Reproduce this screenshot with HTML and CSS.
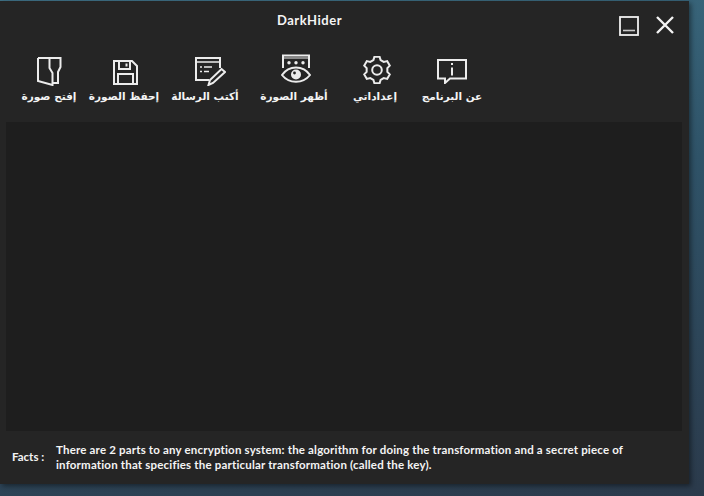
FILE: index.html
```html
<!DOCTYPE html>
<html lang="en">
<head>
    <meta charset="UTF-8">
    <meta name="viewport" content="width=device-width, initial-scale=1.0">
    <title>DarkHider</title>
    <link rel="stylesheet" href="styles.css">
</head>
<body>
    <div class="window">
        <!-- Title bar -->
        <header class="title-bar">
            <h1 class="title">DarkHider</h1>
            <div class="window-buttons">
                <svg width="20" height="20" viewBox="0 0 20 20" fill="none" stroke="#f0f0f0">
                    <rect x="1" y="1" width="18" height="18" stroke-width="1.800"/>
                    <path d="M4 14.500h12" stroke-width="1.600" stroke="#c8c8c8"/>
                </svg>
                <svg width="20" height="20" viewBox="0 0 20 20" fill="none" stroke="#f4f4f4" stroke-width="2.400">
                    <path d="M2 1l16 16M18 1L2 17"/>
                </svg>
            </div>
        </header>

        <!-- Toolbar -->
        <nav class="toolbar">
            <div class="tool tool-open">
                <svg width="25" height="29" viewBox="0 0 25 29" fill="none" stroke="#ececec" stroke-width="2">
                    <path d="M1 1h22.500v9L21 15v11h-5.500"/>
                    <path d="M1 1v23l14.500 4V16l-3-5V1"/>
                </svg>
                <span class="tool-label" dir="rtl">إفتح صورة</span>
            </div>
            <div class="tool tool-save">
                <svg width="25" height="25" viewBox="0 0 25 25" fill="none" stroke="#ececec" stroke-width="2">
                    <path d="M1 1h18l5 5v18H1z"/>
                    <path d="M6 1v8h11V1M13.500 3.500v3"/>
                    <path d="M5 24V14h15v10"/>
                </svg>
                <span class="tool-label" dir="rtl">إحفظ الصورة</span>
            </div>
            <div class="tool tool-write">
                <svg width="31" height="29" viewBox="0 0 31 29" fill="none" stroke="#ececec" stroke-width="2">
                    <path d="M25 11V1H1v22h13"/>
                    <path d="M1 5h24" stroke-width="1.500"/>
                    <path d="M5 10h2M9 10h8M5 14.500h2M9 14.500h5" stroke-width="1.500"/>
                    <path d="M26.500 12l3.500 3-12 11-4.500 2 1.500-5z"/>
                </svg>
                <span class="tool-label" dir="rtl">أكتب الرسالة</span>
            </div>
            <div class="tool tool-show">
                <svg width="30" height="30" viewBox="0 0 30 30" fill="none" stroke="#ececec" stroke-width="2">
                    <path d="M2 14V1.500h26V14"/>
                    <path d="M2 4h26" stroke-width="1"/>
                    <circle cx="8" cy="8.700" r="1.700" fill="#ececec" stroke="none"/>
                    <circle cx="15" cy="8.700" r="1.700" fill="#ececec" stroke="none"/>
                    <circle cx="22" cy="8.700" r="1.700" fill="#ececec" stroke="none"/>
                    <path d="M1 21c7-10 21-10 28 0-7 9-21 9-28 0z"/>
                    <circle cx="15" cy="20.500" r="5" fill="#ececec" stroke="none"/>
                    <circle cx="13.500" cy="19" r="1.400" fill="#252525" stroke="none"/>
                </svg>
                <span class="tool-label" dir="rtl">أظهر الصورة</span>
            </div>
            <div class="tool tool-settings">
                <svg width="28" height="28" viewBox="0 0 28 28" fill="none" stroke="#ececec" stroke-width="2">
                    <path d="M10.410 4.130L11.420.750h5.160l1.010 3.380 3.160 1.830 3.440-.820 2.570 4.460-2.420 2.580v3.640l2.420 2.580-2.570 4.460-3.440-.820-3.160 1.830-1.010 3.380h-5.160l-1.010-3.380-3.160-1.830-3.440.820-2.570-4.460 2.420-2.580v-3.640L1.240 9.600l2.570-4.460 3.440.820z"/>
                    <circle cx="14" cy="14" r="4.800"/>
                </svg>
                <span class="tool-label" dir="rtl">إعداداتي</span>
            </div>
            <div class="tool tool-about">
                <svg width="30" height="25" viewBox="0 0 30 25" fill="none" stroke="#ececec" stroke-width="2">
                    <path d="M1 1h28v18.500H13L8 24v-4.500H1z"/>
                    <path d="M15 8.500v8M15 4v2"/>
                </svg>
                <span class="tool-label" dir="rtl">عن البرنامج</span>
            </div>
        </nav>

        <!-- Message area -->
        <main class="content"></main>

        <!-- Facts -->
        <footer class="facts">
            <span class="facts-label">Facts :</span>
            <p class="facts-text">There are 2 parts to any encryption system: the algorithm for doing the transformation and a secret piece of information that specifies the particular transformation (called the key).</p>
        </footer>
    </div>
</body>
</html>
```

FILE: styles.css
```css
html, body {
    height: 100%;
}

body {
    margin: 0;
    padding-top: 1px;
    box-sizing: border-box;
    overflow: hidden;
    font-family: "Lato", "Liberation Sans", sans-serif;
    color: #f4f4f4;
    background: linear-gradient(170deg, #3f7186 0%, #2f5368 45%, #2b3a4b 100%);
}

/* Main window */
.window {
    width: 689px;
    height: 483px;
    display: flex;
    flex-direction: column;
    background: #252525;
    box-shadow: 2px 2px 5px rgba(0, 0, 0, 0.45);
}

.title-bar {
    height: 52px;
    display: flex;
    align-items: flex-start;
    justify-content: space-between;
    padding: 0 14px 0 277px;
    box-sizing: border-box;
}

.title {
    margin: 11px 0 0;
    font-size: 13px;
    font-weight: 700;
    letter-spacing: 0.5px;
    line-height: 16px;
}

.window-buttons {
    display: flex;
    gap: 16px;
    margin-top: 15px;
}

/* Toolbar */
.toolbar {
    height: 69px;
    display: flex;
    align-items: flex-start;
    padding-left: 19px;
    box-sizing: border-box;
}

.tool {
    display: flex;
    flex-direction: column;
    align-items: center;
    justify-content: flex-end;
    height: 50px;
    flex: none;
}

.tool-label {
    font-family: "DejaVu Sans", sans-serif;
    font-size: 10.500px;
    font-weight: 700;
    line-height: 14px;
    margin-top: 3px;
    white-space: nowrap;
}

.tool-open { width: 60px; }
.tool-save { width: 72px; margin-left: 9px; }
.tool-write { width: 68px; margin-left: 11px; }
.tool-show { width: 68px; margin-left: 21px; }
.tool-settings { width: 50px; margin-left: 22px; }
.tool-about { width: 66px; margin-left: 19px; }

/* icons do not sit quite on the label centre */
.tool-save svg { margin-left: 2px; margin-bottom: 1px; }
.tool-write svg { margin-left: 10px; }
.tool-show svg { margin-left: 3px; margin-bottom: 2px; }
.tool-settings svg { margin-left: 3px; margin-bottom: 2px; }
.tool-about svg { margin-bottom: 2px; }

.content {
    height: 309px;
    margin: 0 7px 0 6px;
    background: #1e1e1e;
}

/* Facts row */
.facts {
    flex: 1;
    display: flex;
    align-items: center;
    padding: 0 60px 2px 12px;
    font-size: 11.500px;
    font-weight: 700;
}

.facts-label {
    width: 44px;
    flex: none;
}

.facts-text {
    margin: 0;
    line-height: 15px;
    letter-spacing: 0.18px;
}
```
